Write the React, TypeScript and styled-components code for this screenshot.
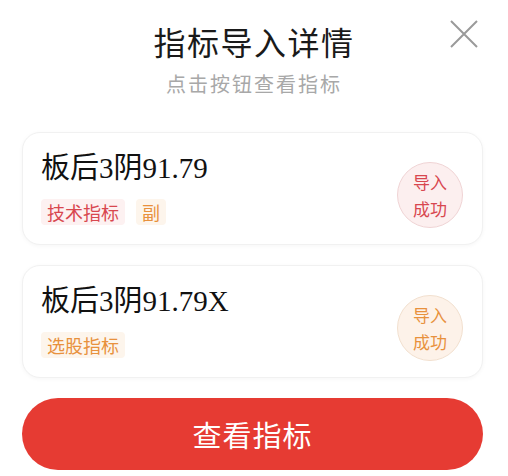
import styled, { createGlobalStyle } from "styled-components"

const GlobalStyle = createGlobalStyle`
    html, body {
        margin: 0;
        padding: 0;
        background: #ffffff;
    }
    body {
        font-family: "Noto Sans CJK SC", "Noto Sans", sans-serif;
    }
`

type Tone = "red" | "orange"

const tones = {
    red: { text: "#d8474f", bg: "#fdf1f1", circle: "#fcefef", border: "#f0d4d5" },
    orange: { text: "#e8913d", bg: "#fdf5ec", circle: "#fdf2e9", border: "#f2e0cf" },
}

interface Tag {
    label: string
    tone: Tone
}

interface Item {
    name: string
    tags: Tag[]
    tone: Tone
}

const items: Item[] = [
    { name: "板后3阴91.79", tags: [{ label: "技术指标", tone: "red" }, { label: "副", tone: "orange" }], tone: "red" },
    { name: "板后3阴91.79X", tags: [{ label: "选股指标", tone: "orange" }], tone: "orange" },
]

const CloseIcon = () => (
    <svg width="28" height="28" viewBox="0 0 28 28" fill="none">
        <path d="M1 1L27 27M27 1L1 27" stroke="#9a9a9a" strokeWidth="2" />
    </svg>
)

export default function App() {
    return (
        <Page>
            <GlobalStyle />
            <Header>
                <Title>指标导入详情</Title>
                <Subtitle>点击按钮查看指标</Subtitle>
                <Close aria-label="关闭"><CloseIcon /></Close>
            </Header>
            <List>
                {items.map((item) => (
                    <Card key={item.name}>
                        <Info>
                            <Name>{item.name}</Name>
                            <Tags>
                                {item.tags.map((t) => (
                                    <TagChip key={t.label} $tone={t.tone}>{t.label}</TagChip>
                                ))}
                            </Tags>
                        </Info>
                        <Status $tone={item.tone}>导入<br />成功</Status>
                    </Card>
                ))}
            </List>
            <ViewButton>查看指标</ViewButton>
        </Page>
    )
}

const Page = styled.div`
    width: 508px;
    height: 476px;
    display: flex;
    flex-direction: column;
    overflow: hidden;
    background: #fff;
`

const Header = styled.div`
    position: relative;
    display: flex;
    flex-direction: column;
    align-items: center;
    padding-top: 21px;
`

const Title = styled.h1`
    margin: 0;
    font-size: 32px;
    line-height: 40px;
    font-weight: 400;
    color: #1a1a1a;
    letter-spacing: 1.5px;
`

const Subtitle = styled.p`
    margin: 9px 0 0;
    font-size: 20px;
    line-height: 28px;
    color: #a8a8a8;
    letter-spacing: 2px;
`

const Close = styled.button`
    position: absolute;
    top: 20px;
    left: 450px;
    padding: 0;
    border: none;
    background: none;
    display: flex;
    cursor: pointer;
`

const List = styled.div`
    display: flex;
    flex-direction: column;
    gap: 20px;
    padding: 0 25px 0 22px;
    margin-top: 34px;
`

const Card = styled.div`
    display: flex;
    align-items: center;
    justify-content: space-between;
    height: 113px;
    box-sizing: border-box;
    padding: 0 19px 0 18px;
    border: 1px solid #f1f1f1;
    border-radius: 18px;
    box-shadow: 0 1px 4px rgba(0, 0, 0, 0.04);
    background: #fff;
`

const Info = styled.div`
    display: flex;
    flex-direction: column;
    gap: 13px;
    margin-top: -3px;
`

const Name = styled.div`
    font-family: "Liberation Serif", "Noto Sans CJK SC", serif;
    font-size: 29px;
    line-height: 36px;
    color: #111;
`

const Tags = styled.div`
    display: flex;
    gap: 11px;
`

const TagChip = styled.span<{ $tone: Tone }>`
    display: flex;
    align-items: center;
    height: 26px;
    padding: 0 6px;
    border-radius: 4px;
    font-size: 18px;
    color: ${(p) => tones[p.$tone].text};
    background: ${(p) => tones[p.$tone].bg};
`

const Status = styled.div<{ $tone: Tone }>`
    width: 64px;
    height: 64px;
    margin-top: 13px;
    border-radius: 50%;
    display: flex;
    align-items: center;
    justify-content: center;
    text-align: center;
    font-size: 17px;
    line-height: 27px;
    color: ${(p) => tones[p.$tone].text};
    background: ${(p) => tones[p.$tone].circle};
    border: 1px solid ${(p) => tones[p.$tone].border};
`

const ViewButton = styled.button`
    margin: 20px 25px 0 22px;
    height: 72px;
    flex-shrink: 0;
    border: none;
    border-radius: 36px;
    background: #e63b33;
    color: #fff;
    font-family: "Noto Sans CJK SC", sans-serif;
    font-size: 29px;
    letter-spacing: 1px;
    cursor: pointer;
`
